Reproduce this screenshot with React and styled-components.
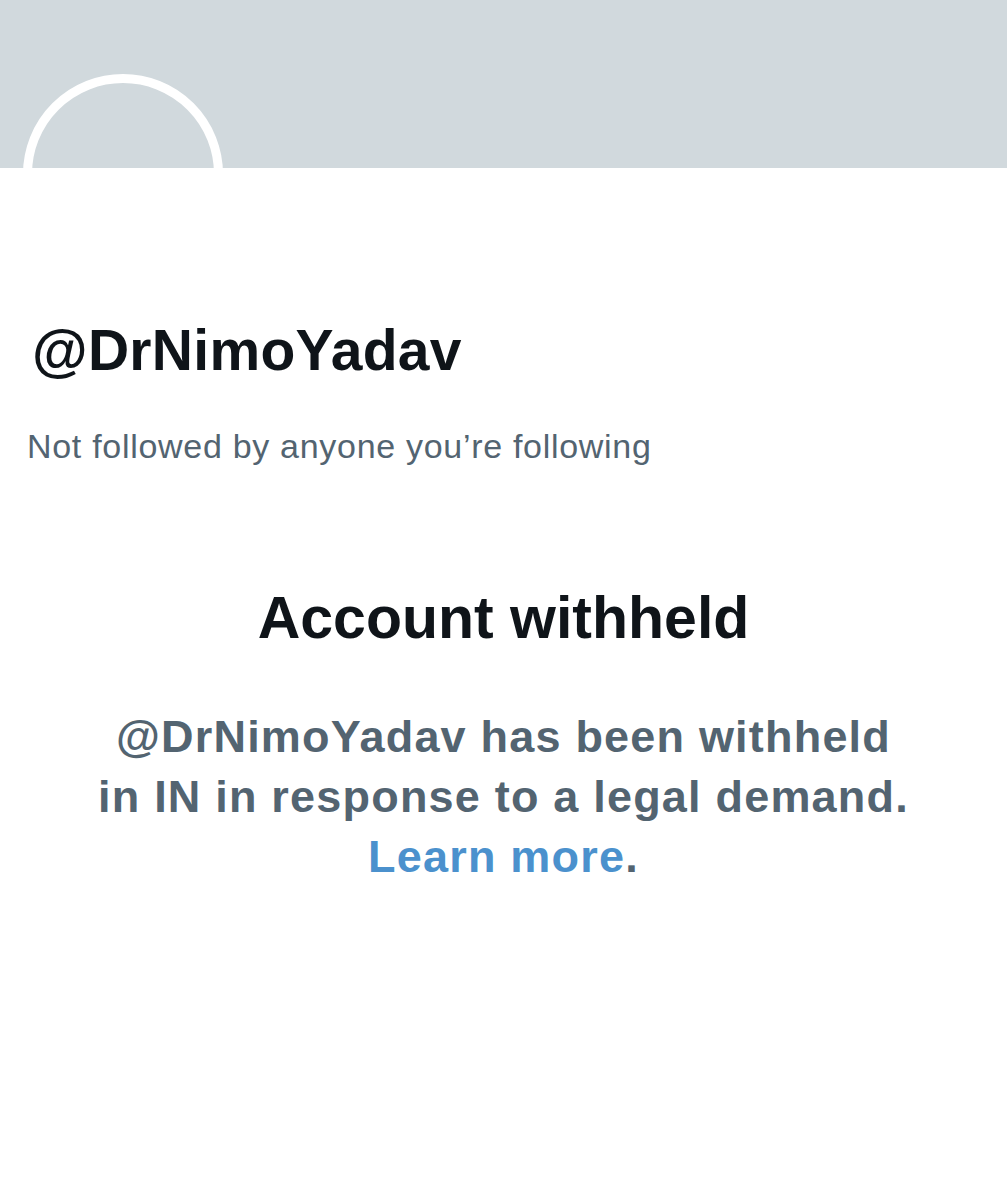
import styled, { createGlobalStyle } from 'styled-components';

const GlobalStyle = createGlobalStyle`
  body {
    margin: 0;
    background: #ffffff;
    font-family: "Liberation Sans", Arial, sans-serif;
  }
`

const Page = styled.div`
  width: 100%;
  min-height: 1200px;
  background: #ffffff;
`

const Banner = styled.div`
  position: relative;
  height: 168px;
  background: #d1d9dd;
`

const Avatar = styled.div`
  position: absolute;
  left: 23px;
  top: 74px;
  width: 200px;
  height: 200px;
  box-sizing: border-box;
  border: 9px solid #ffffff;
  border-radius: 50%;
  background: transparent;
`

const Profile = styled.div`
  padding: 148px 0 0 32px;
`

const Handle = styled.h1`
  margin: 0;
  font-size: 57px;
  line-height: 68px;
  font-weight: 700;
  letter-spacing: 0.3px;
  color: #0f1419;
`

const FollowNote = styled.p`
  margin: 42px 0 0 -5px;
  font-size: 34px;
  line-height: 40px;
  letter-spacing: 0.7px;
  color: #536471;
`

const Notice = styled.section`
  display: flex;
  flex-direction: column;
  align-items: center;
  text-align: center;
  padding-top: 117px;
`

const NoticeTitle = styled.h2`
  margin: 0;
  font-size: 59px;
  line-height: 70px;
  font-weight: 700;
  color: #0f1419;
`

const NoticeText = styled.p`
  margin: 54px 0 0;
  font-size: 45px;
  line-height: 60px;
  font-weight: 700;
  letter-spacing: 1.2px;
  color: #536471;
`

const LearnLink = styled.a`
  color: #4b91cd;
  text-decoration: none;
`

export default function App() {
  return (
    <Page>
      <GlobalStyle />
      <Banner>
        <Avatar />
      </Banner>
      <Profile>
        <Handle>@DrNimoYadav</Handle>
        <FollowNote>Not followed by anyone you’re following</FollowNote>
      </Profile>
      <Notice>
        <NoticeTitle>Account withheld</NoticeTitle>
        <NoticeText>
          @DrNimoYadav has been withheld
          <br />
          in IN in response to a legal demand.
          <br />
          <LearnLink href="#">Learn more</LearnLink>.
        </NoticeText>
      </Notice>
    </Page>
  );
}
